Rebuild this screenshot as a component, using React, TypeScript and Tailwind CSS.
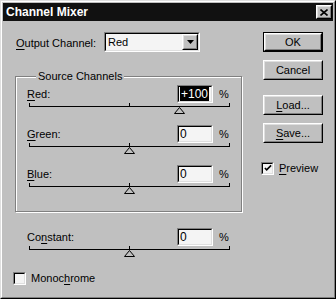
import type { ReactNode } from "react"

const font = "font-['Liberation_Sans',Arial,sans-serif]"

function Bevel({ children, className = "" }: { children: ReactNode; className?: string }) {
  return (
    <div className={`border border-t-white border-l-white border-r-black border-b-black ${className}`}>
      <div className="w-full h-full border border-t-[#dfdfdf] border-l-[#dfdfdf] border-r-[#808080] border-b-[#808080] flex items-center justify-center bg-[#c0c0c0]">
        {children}
      </div>
    </div>
  )
}

function Sunken({ children, className = "" }: { children: ReactNode; className?: string }) {
  return (
    <div className={`border border-t-[#808080] border-l-[#808080] border-r-white border-b-white ${className}`}>
      <div className="w-full h-full border border-t-black border-l-black border-r-[#dfdfdf] border-b-[#dfdfdf] bg-[#f4f4f4] flex items-center">
        {children}
      </div>
    </div>
  )
}

function Button({ label, u, isDefault }: { label: string; u?: number; isDefault?: boolean }) {
  const text =
    u === undefined ? (
      label
    ) : (
      <>
        {label.slice(0, u)}
        <span className="underline underline-offset-2">{label[u]}</span>
        {label.slice(u + 1)}
      </>
    )
  if (isDefault) {
    return (
      <div className="w-[60px] h-[20px] border border-black">
        <Bevel className="w-full h-full">
          <span className="text-[11px] text-black">{text}</span>
        </Bevel>
      </div>
    )
  }
  return (
    <Bevel className="w-[60px] h-[20px]">
      <span className="text-[11px] text-black">{text}</span>
    </Bevel>
  )
}

function Checkbox({ checked }: { checked: boolean }) {
  return (
    <Sunken className="w-[13px] h-[13px] shrink-0">
      {checked && (
        <svg width="9" height="9" viewBox="0 0 9 9" className="ml-px">
          <path d="M1 4 L3 6 L8 1" stroke="black" strokeWidth="1.8" fill="none" />
        </svg>
      )}
    </Sunken>
  )
}

function Label({ text, u }: { text: string; u: number }) {
  return (
    <span className="text-[11px] text-black">
      {text.slice(0, u)}
      <span className="underline underline-offset-2">{text[u]}</span>
      {text.slice(u + 1)}
    </span>
  )
}

function Slider({
  label,
  u,
  value,
  selected,
}: {
  label: string
  u: number
  value: number
  selected?: boolean
}) {
  const pos = ((value + 200) / 400) * 200
  const shown = value > 0 ? `+${value}` : `${value}`
  return (
    <div className="h-[40px] w-[202px]">
      <div className="flex items-center h-[18px]">
        <Label text={label} u={u} />
        <Sunken className="ml-auto w-[36px] h-[18px]">
          <span className="pl-px text-[12px] leading-[14px]">
            {selected ? <span className="bg-black text-white px-px">{shown}</span> : shown}
          </span>
        </Sunken>
        <span className="ml-[6px] w-[10px] text-[11px]">%</span>
      </div>
      <div className="relative ml-[2px] mt-[3px] w-[201px] h-[16px] border-t border-black">
        <div className="absolute left-0 -top-[4px] w-px h-[4px] bg-black" />
        <div className="absolute left-[100px] -top-[4px] w-px h-[4px] bg-black" />
        <div className="absolute right-0 -top-[4px] w-px h-[4px] bg-black" />
        <svg
          width="11"
          height="7"
          viewBox="0 0 11 7"
          className="absolute top-0"
          style={{ left: pos - 5 }}
        >
          <polygon points="5.5,0.5 10.5,6.5 0.5,6.5" fill="#c0c0c0" stroke="black" strokeWidth="1" />
        </svg>
      </div>
    </div>
  )
}

export default function App() {
  return (
    <div
      className={`${font} w-[336px] h-[299px] bg-[#c0c0c0] border border-t-[#dfdfdf] border-l-[#dfdfdf] border-r-black border-b-black`}
    >
      <div className="h-full border border-t-white border-l-white border-r-[#808080] border-b-[#808080]">
        <div className="mx-px mt-px h-[18px] bg-[#111] flex items-center justify-between pl-[3px] pr-[1px]">
          <span className="text-white font-bold text-[12px]">Channel Mixer</span>
          <Bevel className="w-[16px] h-[14px]">
            <svg width="8" height="7" viewBox="0 0 8 7">
              <path d="M0.5 0.5 L7.5 6.5 M7.5 0.5 L0.5 6.5" stroke="black" strokeWidth="1.6" />
            </svg>
          </Bevel>
        </div>

        <div className="flex pt-[11px] pl-[13px]">
          <div className="w-[227px]">
            <div className="flex items-center h-[20px]">
              <div className="w-[89px] pl-px">
                <Label text="Output Channel:" u={0} />
              </div>
              <Sunken className="w-[96px] h-[20px]">
                <span className="pl-[2px] text-[11px] flex-1">Red</span>
                <Bevel className="w-[16px] h-[16px] mr-0">
                  <svg width="7" height="4" viewBox="0 0 7 4">
                    <polygon points="0,0 7,0 3.5,4" fill="black" />
                  </svg>
                </Bevel>
              </Sunken>
            </div>

            <div className="relative mt-[24px] w-[227px] border border-[#808080] shadow-[inset_1px_1px_0_#fff,1px_1px_0_#fff] pt-[8px] pl-[11px] pb-[6px]">
              <span className="absolute left-[20px] -top-[8px] px-[2px] bg-[#c0c0c0] text-[11px] leading-[14px]">
                Source Channels
              </span>
              <Slider label="Red:" u={0} value={100} selected />
              <Slider label="Green:" u={0} value={0} />
              <Slider label="Blue:" u={0} value={0} />
            </div>

            <div className="mt-[16px] pl-[12px]">
              <Slider label="Constant:" u={2} value={0} />
            </div>

            <div className="mt-[2px] -ml-[2px] flex items-center gap-[5px]">
              <Checkbox checked={false} />
              <Label text="Monochrome" u={5} />
            </div>
          </div>

          <div className="ml-[21px] w-[60px] flex flex-col">
            <Button label="OK" isDefault />
            <div className="mt-[8px]">
              <Button label="Cancel" />
            </div>
            <div className="mt-[15px]">
              <Button label="Load..." u={0} />
            </div>
            <div className="mt-[8px]">
              <Button label="Save..." u={0} />
            </div>
            <div className="mt-[17px] -ml-[2px] flex items-center gap-[5px]">
              <Checkbox checked />
              <Label text="Preview" u={0} />
            </div>
          </div>
        </div>
      </div>
    </div>
  )
}
